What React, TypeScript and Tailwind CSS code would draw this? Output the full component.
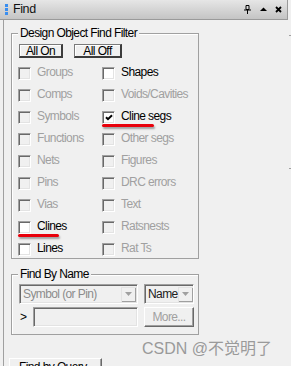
import React from "react";

type Item = { label: string; enabled: boolean; checked?: boolean };

const left: Item[] = [
  { label: "Groups", enabled: false },
  { label: "Comps", enabled: false },
  { label: "Symbols", enabled: false },
  { label: "Functions", enabled: false },
  { label: "Nets", enabled: false },
  { label: "Pins", enabled: false },
  { label: "Vias", enabled: false },
  { label: "Clines", enabled: true },
  { label: "Lines", enabled: true },
];
const right: Item[] = [
  { label: "Shapes", enabled: true },
  { label: "Voids/Cavities", enabled: false },
  { label: "Cline segs", enabled: true, checked: true },
  { label: "Other segs", enabled: false },
  { label: "Figures", enabled: false },
  { label: "DRC errors", enabled: false },
  { label: "Text", enabled: false },
  { label: "Ratsnests", enabled: false },
  { label: "Rat Ts", enabled: false },
];

function CheckItem({ item }: { item: Item }) {
  return (
    <div className="flex items-start gap-[6px] h-[13px]">
      <span
        className={
          "w-[13px] h-[13px] shrink-0 flex items-center justify-center border border-t-[#a0a0a0] border-l-[#a0a0a0] border-r-white border-b-white shadow-[inset_1px_1px_0_#696969,inset_-1px_-1px_0_#e3e3e3] " +
          (item.enabled ? "bg-white" : "bg-[#f0f0f0]")
        }
      >
        {item.checked && (
          <svg width="8" height="7" viewBox="0 0 8 7">
            <path d="M1 3.2 L3 5.2 L7 1.2" stroke="#000" strokeWidth="2" fill="none" />
          </svg>
        )}
      </span>
      <span
        className={
          "leading-[10px] whitespace-nowrap " + (item.enabled ? "text-black" : "text-[#a0a0a0]")
        }
      >
        {item.label}
      </span>
    </div>
  );
}

function DropBtn() {
  return (
    <span className="w-[15px] h-[15px] shrink-0 bg-[#f0f0f0] flex items-center justify-center shadow-[inset_1px_1px_0_#e3e3e3,inset_-1px_-1px_0_#a0a0a0]">
      <svg width="7" height="4" viewBox="0 0 7 4">
        <path d="M0 0 H7 L3.5 4 Z" fill="#a0a0a0" />
      </svg>
    </span>
  );
}

export default function App() {
  const rows: Item[] = [];
  for (let i = 0; i < left.length; i++) {
    rows.push(left[i], right[i]);
  }
  return (
    <div className="relative w-[291px] h-[366px] overflow-hidden bg-[#f0f0f0] text-[12px] tracking-[-0.6px] text-black font-['Liberation_Sans',Arial,sans-serif]">
      {/* Title bar */}
      <div className="w-[288px] h-[20px] flex items-center border-r border-b border-[#9a9a9a] bg-gradient-to-b from-[#e6e6e6] to-[#c4c4c4]">
        <div className="ml-[5px] w-[3px] flex flex-col gap-[1px]">
          <span className="h-[3px] bg-[#3a8ef0]" />
          <span className="h-[3px] bg-[#3a8ef0]" />
          <span className="h-[3px] bg-[#3a8ef0]" />
        </div>
        <span className="ml-[5px] text-[12.5px] tracking-[-0.4px] text-[#111]">Find</span>
        <div className="ml-auto mr-[5px] flex items-center gap-[8px]">
          <svg width="9" height="9" viewBox="0 0 9 9">
            <path d="M3 0.5 H6 V4.5 H3 Z" stroke="#000" strokeWidth="1" fill="none" />
            <path d="M1 5 H8" stroke="#000" strokeWidth="1" />
            <path d="M4.5 5 V9" stroke="#000" strokeWidth="1" />
          </svg>
          <svg width="7" height="5" viewBox="0 0 7 5">
            <path d="M0 4 H7 L3.5 0.5 Z" fill="#000" />
          </svg>
          <svg width="7" height="7" viewBox="0 0 7 7">
            <path d="M1 1 L6 6 M6 1 L1 6" stroke="#000" strokeWidth="1.8" />
          </svg>
        </div>
      </div>

      {/* Body */}
      <div className="ml-[3px] h-[346px] border-l border-[#a0a0a0] pl-[5px] flex flex-col items-start">
        <fieldset className="ml-[2px] mt-[7px] w-[188px] border border-[#a0a0a0] shadow-[inset_1px_1px_0_#fff] pl-[6px] pt-[4px] pb-[2px]">
          <legend className="px-[2px] leading-[13px] bg-[#f0f0f0]">Design Object Find Filter</legend>
          <div className="flex gap-[11px] ml-[1px]">
            <button className="w-[44px] h-[14px] leading-[12px] bg-[#f0f0f0] border-t border-l border-t-[#7a7a7a] border-l-[#7a7a7a] border-r-2 border-b-2 border-r-[#3c3c3c] border-b-[#3c3c3c] shadow-[inset_1px_1px_0_#fff]">
              All On
            </button>
            <button className="w-[48px] h-[14px] leading-[12px] bg-[#f0f0f0] border-t border-l border-t-[#7a7a7a] border-l-[#7a7a7a] border-r-2 border-b-2 border-r-[#3c3c3c] border-b-[#3c3c3c] shadow-[inset_1px_1px_0_#fff]">
              All Off
            </button>
          </div>
          <div className="mt-[9px] grid grid-cols-[84px_1fr] gap-y-[9px]">
            {rows.map((it) => (
              <CheckItem key={it.label} item={it} />
            ))}
          </div>
        </fieldset>

        <fieldset className="ml-[2px] mt-[9px] w-[188px] border border-[#a0a0a0] shadow-[inset_1px_1px_0_#fff] pl-[7px] pt-[3px] pb-[7px]">
          <legend className="-ml-[1px] px-[2px] leading-[13px] bg-[#f0f0f0]">Find By Name</legend>
          <div className="flex gap-[6px]">
            <div className="w-[119px] h-[20px] flex items-center pl-[3px] pr-[1px] border border-t-[#a0a0a0] border-l-[#a0a0a0] border-r-white border-b-white shadow-[inset_1px_1px_0_#696969,inset_-1px_-1px_0_#e3e3e3]">
              <span className="flex-1 text-[#8c8c8c] leading-[12px]">Symbol (or Pin)</span>
              <DropBtn />
            </div>
            <div className="w-[50px] h-[20px] flex items-center pl-[3px] pr-[1px] border border-t-[#a0a0a0] border-l-[#a0a0a0] border-r-white border-b-white shadow-[inset_1px_1px_0_#696969,inset_-1px_-1px_0_#e3e3e3]">
              <span className="flex-1 text-[#202020] leading-[12px]">Name</span>
              <DropBtn />
            </div>
          </div>
          <div className="mt-[3px] flex items-center">
            <span className="w-[14px] pl-[1px] leading-[12px]">&gt;</span>
            <div className="w-[105px] h-[20px] border border-t-[#a0a0a0] border-l-[#a0a0a0] border-r-white border-b-white shadow-[inset_1px_1px_0_#696969,inset_-1px_-1px_0_#e3e3e3]" />
            <button className="ml-[6px] w-[50px] h-[20px] leading-[12px] text-[#a0a0a0] bg-[#f0f0f0] border border-t-white border-l-white border-r-[#696969] border-b-[#696969] shadow-[inset_-1px_-1px_0_#a0a0a0]">
              More...
            </button>
          </div>
        </fieldset>

        <button className="mt-[23px] w-[93px] h-[22px] text-left pl-[9px] pt-[2px] leading-[12px] flex items-start bg-[#f0f0f0] border border-t-white border-l-white border-r-[#696969] border-b-[#696969] shadow-[inset_-1px_-1px_0_#a0a0a0]">
          Find by Query
        </button>
      </div>

      {/* Red annotation underlines */}
      <div className="absolute left-[102px] top-[124px] w-[52px] h-[3px] bg-[#e8000b] rounded-full shadow-[1px_2px_2px_rgba(0,0,0,0.35)]" />
      <div className="absolute left-[18px] top-[234px] w-[41px] h-[3px] bg-[#e8000b] rounded-full shadow-[1px_2px_2px_rgba(0,0,0,0.35)]" />

      {/* small ticks at right edge */}
      <div className="absolute left-[289px] top-[35px] w-[2px] h-[1px] bg-[#a0a0a0]" />
      <div className="absolute left-[289px] top-[168px] w-[2px] h-[1px] bg-[#a0a0a0]" />

      {/* Watermark */}
      <div className="absolute left-[142px] top-[339px] text-[16px] leading-[20px] tracking-[0px] text-[#9a9a9a] whitespace-nowrap font-['Liberation_Sans','Noto_Sans_CJK_SC',sans-serif]">
        CSDN @不觉明了
      </div>
    </div>
  );
}
